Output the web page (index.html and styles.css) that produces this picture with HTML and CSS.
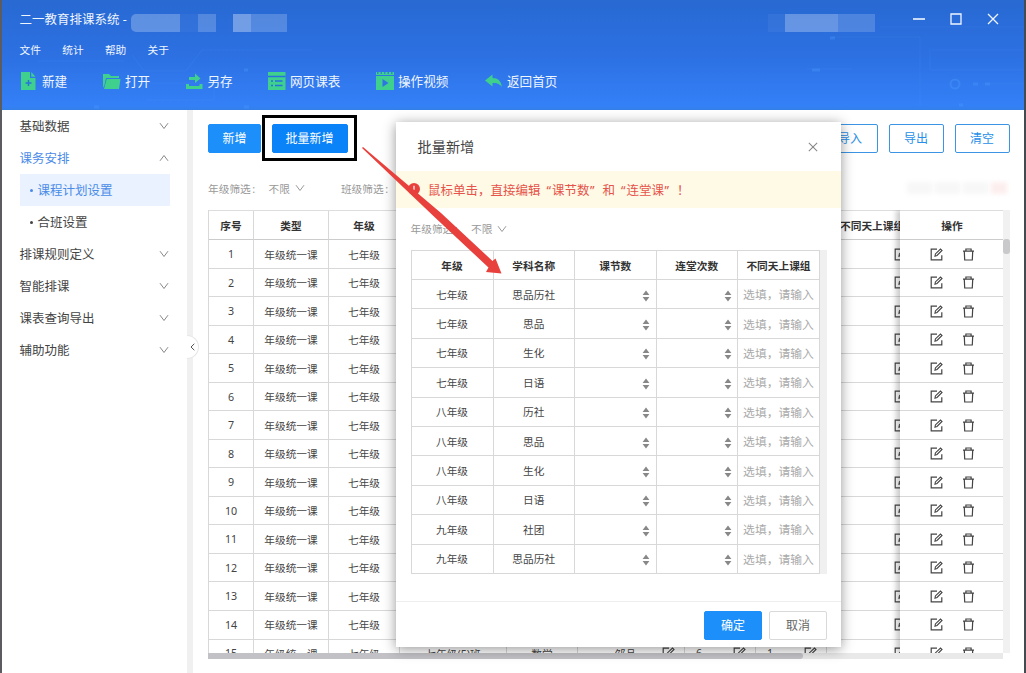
FILE: index.html
```html
<!DOCTYPE html>
<html lang="zh-CN">
<head>
<meta charset="utf-8">
<title>二一教育排课系统</title>
<link rel="stylesheet" href="styles.css">
</head>
<body>
<svg class="defs" aria-hidden="true">
  <symbol id="down" viewBox="0 0 10 8"><path d="M1 1.2 5 6.5 9 1.2" fill="none" stroke="currentColor" stroke-width="1"/></symbol>
  <symbol id="up" viewBox="0 0 10 8"><path d="M1 6.8 5 1.5 9 6.8" fill="none" stroke="currentColor" stroke-width="1"/></symbol>
  <symbol id="cross" viewBox="0 0 12 12"><path d="M1 1 11 11M11 1 1 11" fill="none" stroke="currentColor" stroke-width="1.3"/></symbol>
  <symbol id="edit" viewBox="0 0 13 13"><path d="M7 1.2H1.2V11.8H11.8V7.3" fill="none" stroke="currentColor" stroke-width="1.2"/><path d="M5 8.2 5.4 5.9 10.5 1 12 2.4 7 7.5Z" fill="none" stroke="currentColor" stroke-width="1.1"/></symbol>
  <symbol id="trash" viewBox="0 0 12 13"><path d="M.5 3.2H11.5M3.4 3V1H8.6V3M1.8 3.4 2.2 12H9.8L10.2 3.4" fill="none" stroke="currentColor" stroke-width="1.2"/></symbol>
  <symbol id="sort" viewBox="0 0 8 12"><path d="M4 .5 7.4 4.9H.6ZM4 11.5 7.4 7.1H.6Z" fill="currentColor"/></symbol>
</svg>
<div class="window">
  <header class="top">
    <svg class="circuit" viewBox="0 0 1022 110" fill="none" stroke="#4b9bff" stroke-opacity=".16">
      <path d="M36 61H122M130 55 142 71H184L200 50H310M140 83H212V100H145M878 27H1022M930 50H1022M928 48V70H1022M830 37H918V106M805 69H850M980 84H1022"/>
      <circle cx="953" cy="84" r="4.5" stroke-width="2" stroke-opacity=".4"/>
      <path d="M828 38h5M810 70h8M971 84h5M983 84h5M957 105h4M242 70h4M92 107h5M242 107h5" stroke-width="3" stroke-opacity=".35"/>
    </svg>
    <div class="titlebar">
      <span class="title">二一教育排课系统 -</span>
      <span class="mosaic name"><i></i><i></i><i></i><i></i><i></i><i></i></span>
      <span class="mosaic user"><i></i><i></i><i></i></span>
      <span class="controls">
        <svg viewBox="0 0 12 12"><path d="M0 6H12" stroke="currentColor" stroke-width="1.6"/></svg>
        <svg viewBox="0 0 12 12"><path d="M1 1H11V11H1Z" fill="none" stroke="currentColor" stroke-width="1.3"/></svg>
        <svg><use href="#cross"/></svg>
      </span>
    </div>
    <nav class="menu"><span>文件</span><span>统计</span><span>帮助</span><span>关于</span></nav>
    <nav class="tools">
      <span><svg viewBox="0 0 18 18"><path d="M0 0H9V6H14.500V18H0ZM10.300 0 14.500 4.800H10.300Z"/><path d="M4.500 11H10.500M7.500 8V14" stroke="#2673dd" stroke-width="1.500"/></svg>新建</span>
      <span><svg viewBox="0 0 18 18"><path d="M0 2H6L8 4H16V6H3L1.500 13 0 16ZM3.700 7H17.500L16 17H1Z"/></svg>打开</span>
      <span><svg viewBox="0 0 18 18"><path d="M3 5H9V1.500L14.500 6.500 9 11V8H3ZM0 12H3V14H13.500V12H16.500V17H0Z"/></svg>另存</span>
      <span><svg viewBox="0 0 18 18"><path d="M0 0H17.500V18H0Z"/><path d="M0 4.500H17.500M3 9H5M7 9H14.500M3 13.500H5M7 13.500H14.500" stroke="#286fe0" stroke-width="1.500"/></svg>网页课表</span>
      <span><svg viewBox="0 0 18 18"><path d="M0 0H18V18H0Z"/><path d="M0 3.500H18" stroke="#2d75e5" stroke-width="1"/><path d="M1 1H18" stroke="#2d75e5" stroke-width="1.500" stroke-dasharray="1.500 2"/><path d="M6.500 7 12.500 11 6.500 15Z" fill="#2d75e5"/></svg>操作视频</span>
      <span><svg viewBox="0 0 18 18"><path d="M0 8.500 7.500 2.500V6C13 6 16 9 17 15 14 11.500 12 11 7.500 11V14.500Z"/></svg>返回首页</span>
    </nav>
  </header>
  <div class="body">
    <aside class="side">
      <div class="item">基础数据<svg><use href="#down"/></svg></div>
      <div class="item open">课务安排<svg><use href="#up"/></svg></div>
      <div class="sub active"><b></b>课程计划设置</div>
      <div class="sub"><b></b>合班设置</div>
      <div class="item">排课规则定义<svg><use href="#down"/></svg></div>
      <div class="item">智能排课<svg><use href="#down"/></svg></div>
      <div class="item">课表查询导出<svg><use href="#down"/></svg></div>
      <div class="item">辅助功能<svg><use href="#down"/></svg></div>
    </aside>
    <div class="divider"><span class="collapse"><svg viewBox="0 0 5 8"><path d="M4.300.8 1 4 4.300 7.200" fill="none" stroke="#555"/></svg></span></div>
    <main class="main">
      <div class="actions">
        <button class="btn primary">新增</button>
        <span class="highlight"><button class="btn primary strong">批量新增</button></span>
        <span class="grow"></span>
        <button class="btn outline">导入</button>
        <button class="btn outline">导出</button>
        <button class="btn outline">清空</button>
      </div>
      <div class="filters">
        <span class="label">年级筛选<s>:</s></span><span class="pick">不限<svg><use href="#down"/></svg></span><span class="label second">班级筛选<s>:</s></span>
        <span class="smudge"><i></i><i></i><i></i><i></i></span>
      </div>
      <div class="sheet">
        <div class="plan" id="plan"></div>
        <div class="fixed" id="fixed"></div>
        <div class="vbar"><i></i></div>
      </div>
      <div class="hbar"><i></i></div>
    </main>
  </div>
</div>

<section class="modal">
  <div class="mhead">批量新增<svg><use href="#cross"/></svg></div>
  <div class="notice"><svg viewBox="0 0 12 12"><circle cx="6" cy="6" r="6" fill="#e8403c"/><path d="M6 2.700V6.800M6 8V9.300" stroke="#fff" stroke-width="1.200"/></svg><span>鼠标单击，直接编辑<q>课节数</q>和<q>连堂课</q>！</span></div>
  <div class="filters mfilter"><span class="label">年级筛选<s>:</s></span><span class="pick">不限<svg><use href="#down"/></svg></span></div>
  <div class="mtable"><div class="mgrid" id="batch"></div><div class="gutter"></div></div>
  <footer class="mfoot"><button class="btn primary">确定</button><button class="btn plain">取消</button></footer>
</section>
<svg class="arrow" viewBox="0 0 145 135"><path d="M2 0 80 66 131.500 114 134.500 111.500 140.500 126.500 125 125 127.500 120.500 74 70.500 1 1Z" fill="#e8403c"/></svg>
<script src="script.js"></script>
</body>
</html>
```
FILE: styles.css
```css
* { box-sizing: border-box; }
body { margin: 0; width: 1026px; height: 673px; overflow: hidden; position: relative; background: #fff; color: #444; font-family: "Noto Sans", "Noto Sans CJK SC", sans-serif; font-size: 10.7px; white-space: nowrap; }
svg { display: block; flex: none; }
i { display: block; }
button { font-family: inherit; padding: 0; }
.defs { position: absolute; width: 0; height: 0; }
.window { height: 673px; border-left: 2px solid #5c5c60; border-right: 2px solid #454950; display: flex; flex-direction: column; }

.top { position: relative; height: 110px; flex: none; background: linear-gradient(#2869d2, #2c70e2 50%, #3480f7 96%, #3380e8); color: #f0f6ff; }
.circuit { position: absolute; inset: 0; width: 1022px; height: 110px; }
.titlebar { position: relative; height: 38px; padding-left: 17.500px; display: flex; align-items: center; font-size: 12.5px; }
.title { width: 111.500px; margin-top: -1px; }
.mosaic { display: grid; height: 18px; margin-top: 7px; }
.mosaic i { background: #fff; opacity: .2; }
.name { grid-template-columns: 49px 18px 18px 17px 18px 36px; width: 156px; border-radius: 5px 0 0 5px; overflow: hidden; }
.name i:nth-child(1) { opacity: .25; }
.name i:nth-child(2) { opacity: .04; }
.name i:nth-child(4) { opacity: 0; }
.name i:nth-child(5) { opacity: .34; }
.user { grid-template-columns: 17px 53px 37px; margin-left: 481px; }
.user i:nth-child(1) { opacity: .05; }
.user i:nth-child(2) { opacity: .28; }
.user i:nth-child(3) { opacity: .17; }
.controls { display: flex; gap: 25px; margin-left: 38px; }
.controls svg { width: 12px; height: 12px; }
.menu { position: relative; display: flex; gap: 21.3px; padding-left: 17.500px; height: 22px; align-items: center; }
.tools { position: relative; display: grid; grid-template-columns: 82px 82.500px 82.500px 108px 109px auto; padding-left: 19px; height: 40px; align-items: center; font-size: 12.600px; }
.tools span { display: flex; align-items: center; gap: 4px; }
.tools span:first-child { gap: 3px; }
.tools svg { width: 18px; height: 18px; margin-top: 2px; fill: #3fd08d; }

.body { flex: 1; min-height: 0; display: flex; }
.side { width: 185px; padding: 0 18px 0 17.500px; font-size: 12.500px; }
.item { height: 32px; display: flex; align-items: center; justify-content: space-between; padding-bottom: 1px; }
.item svg { width: 10px; height: 8px; color: #888; margin-top: 1px; }
.item.open { color: #4a8be8; }
.sub { height: 32px; display: flex; align-items: center; padding: 0 0 1px 10px; gap: 5px; width: 150px; }
.sub b { width: 3px; height: 3px; margin-top: 2px; border-radius: 50%; background: currentColor; }
.sub.active { color: #4a8be8; background: #e9f2fe; }
.divider { width: 6px; background: #f0f0f0; position: relative; }
.collapse { position: absolute; left: 0; top: 225px; width: 12px; height: 24px; border: 1px solid #e6e6e6; border-left: 0; border-radius: 0 12px 12px 0; background: #fff; display: flex; align-items: center; padding-left: 3px; }
.collapse svg { width: 5px; height: 8px; }

.main { flex: 1; min-width: 0; padding: 5px 14px 0 15px; }
.actions { display: flex; align-items: center; height: 46px; padding-right: .5px; }
.btn { height: 29px; border-radius: 2px; font-size: 12px; border: 1px solid; width: 55px; }
.primary { background: #1d8ffb; border-color: #1d8ffb; color: #fff; width: 53px; }
.strong { background: #0a82f8; border-color: #0a82f8; width: 76px; }
.highlight { width: 95px; height: 46px; border: 3px solid #000; display: flex; align-items: center; padding-left: 6.500px; margin-left: 1px; }
.grow { flex: 1; }
.outline { background: #fff; color: #268fe8; border-color: #3b94e4; margin-left: 11px; }
.filters { display: flex; align-items: center; color: #999; }
.main .filters { height: 49px; padding-top: 5px; }
.label { width: 47px; }
.label s { text-decoration: none; margin-left: 1.500px; }
.filters .pick { display: flex; align-items: center; gap: 5px; margin-left: 13.500px; }
.filters .pick svg { width: 10px; height: 8px; }
.second { margin-left: 36px; }
.smudge { display: flex; margin-left: auto; height: 12px; filter: blur(2px); }
.smudge i { width: 25px; background: #f7f7f7; margin-right: 3px; }
.smudge i:nth-child(4) { background: #fdeeee; width: 16px; }

.sheet { display: flex; height: 443px; overflow: hidden; position: relative; }
.plan { width: 692px; overflow: hidden; border-left: 1px solid #d8d8d8; border-top: 1px solid #ddd; }
.row { display: grid; grid-template-columns: 45px 75px 71px 107px 71px 107px 71px 71px 93px; width: 711px; height: 28.530px; }
.row > span { display: flex; align-items: center; justify-content: center; border-right: 1px solid #d8d8d8; border-bottom: 1px solid #d8d8d8; }
.row.head, .frow.head { height: 29.300px; font-weight: 700; color: #333; padding-bottom: 0; }
.head > span, .frow.head { border-bottom-color: #ccc; }
.row svg, .frow svg { width: 13px; height: 13px; color: #444; }
.row > .num { justify-content: space-between; padding: 0 9px 0 11px; }
.row > .last { justify-content: flex-end; padding-right: 12px; }
.row > .group { justify-content: flex-start; padding-left: 13px; }
.fixed { width: 103px; border-top: 1px solid #ddd; background: #fff; box-shadow: -4px 0 5px rgba(0,0,0,.2); }
.frow { height: 28.530px; display: flex; align-items: center; justify-content: center; gap: 19px; padding-left: 1px; border-bottom: 1px solid #d8d8d8; }
.vbar { width: 7px; background: #f1f1f1; padding-top: 29px; }
.vbar i { height: 15px; background: #c9c9cc; border-radius: 3px; }
.hbar { width: 795px; height: 6px; background: #e9e9e9; }
.hbar i { width: 595px; height: 6px; background: #c2c2c6; border-radius: 0 3px 3px 0; }

.modal { position: absolute; left: 396px; top: 122px; width: 445px; height: 525px; background: #fff; box-shadow: 0 2px 12px rgba(0,0,0,.42); display: flex; flex-direction: column; }
.mhead { height: 49px; padding: 0 23px 1px 21.500px; display: flex; align-items: center; justify-content: space-between; font-size: 14.200px; color: #444; }
.mhead svg { width: 10px; height: 10px; color: #888; margin-top: 1px; }
.notice { height: 37px; background: #fffae6; display: flex; align-items: center; padding: 0 0 1px 12px; gap: 8px; color: #e5534b; font-size: 12.500px; }
.notice svg { width: 12px; height: 12px; }
.notice q { quotes: none; }
.notice q::before { content: "“"; margin: 0 1px 0 6px; }
.notice q::after { content: "”"; margin: 0 8px 0 .5px; }
.mfilter { height: 42px; padding: 0 0 1px 14.500px; }
.mtable { display: flex; padding: 0 14px 0 14.500px; height: 324px; }
.mgrid { width: 409.500px; border-left: 1px solid #d8d8d8; border-top: 1px solid #d8d8d8; }
.mrow { display: grid; grid-template-columns: 82px 81.500px 81.500px 81.500px 82px; height: 29.400px; }
.mrow > span { border-right: 1px solid #d8d8d8; border-bottom: 1px solid #d8d8d8; display: flex; align-items: center; justify-content: center; }
.mrow.head { height: 29px; font-weight: 700; color: #333; }
.mrow > .step { justify-content: flex-end; padding: 3px 5.500px 0 0; }
.step svg { width: 8px; height: 12px; color: #888; }
.mrow > .hint { color: #aaa; font-size: 11.800px; padding-bottom: 1px; }
.gutter { width: 7px; background: #f0f0f0; }
.mfoot { margin-top: auto; height: 46px; border-top: 1px solid #eee; display: flex; justify-content: flex-end; gap: 7px; padding: 9px 14px 0 0; }
.mfoot .btn { width: 58px; padding-bottom: 1px; }
.plain { background: #fff; border-color: #d9d9d9; color: #666; }
.arrow { position: absolute; left: 361px; top: 147px; width: 145px; height: 135px; }
```
FILE: script.js
```js
const icon = (id) => `<svg><use href="#${id}"/></svg>`;
const cells = (list) => list.map((t) => `<span>${t}</span>`).join('');

let plan = `<div class="row head">${cells(['序号', '类型', '年级', '班级', '学科', '教师', '课节数', '连堂次数'])}<span class="group">不同天上课组</span></div>`;
let ops = '<div class="frow head">操作</div>';
for (let n = 1; n <= 15; n++) {
  plan += `<div class="row">${cells([n, '年级统一课', '七年级', '七年级(5)班', '数学'])}` +
    `<span class="num"><em></em>邹品${icon('edit')}</span><span class="num">6${icon('edit')}</span>` +
    `<span class="num">1${icon('edit')}</span><span class="last">${icon('edit')}</span></div>`;
  ops += `<div class="frow">${icon('edit')}${icon('trash')}</div>`;
}
document.getElementById('plan').innerHTML = plan;
document.getElementById('fixed').innerHTML = ops;

const subjects = [
  ['七年级', '思品历社'], ['七年级', '思品'], ['七年级', '生化'], ['七年级', '日语'],
  ['八年级', '历社'], ['八年级', '思品'], ['八年级', '生化'], ['八年级', '日语'],
  ['九年级', '社团'], ['九年级', '思品历社']
];
const step = `<span class="step">${icon('sort')}</span>`;
document.getElementById('batch').innerHTML =
  `<div class="mrow head">${cells(['年级', '学科名称', '课节数', '连堂次数', '不同天上课组'])}</div>` +
  subjects.map((s) => `<div class="mrow">${cells(s)}${step}${step}<span class="hint">选填，请输入</span></div>`).join('');
```
